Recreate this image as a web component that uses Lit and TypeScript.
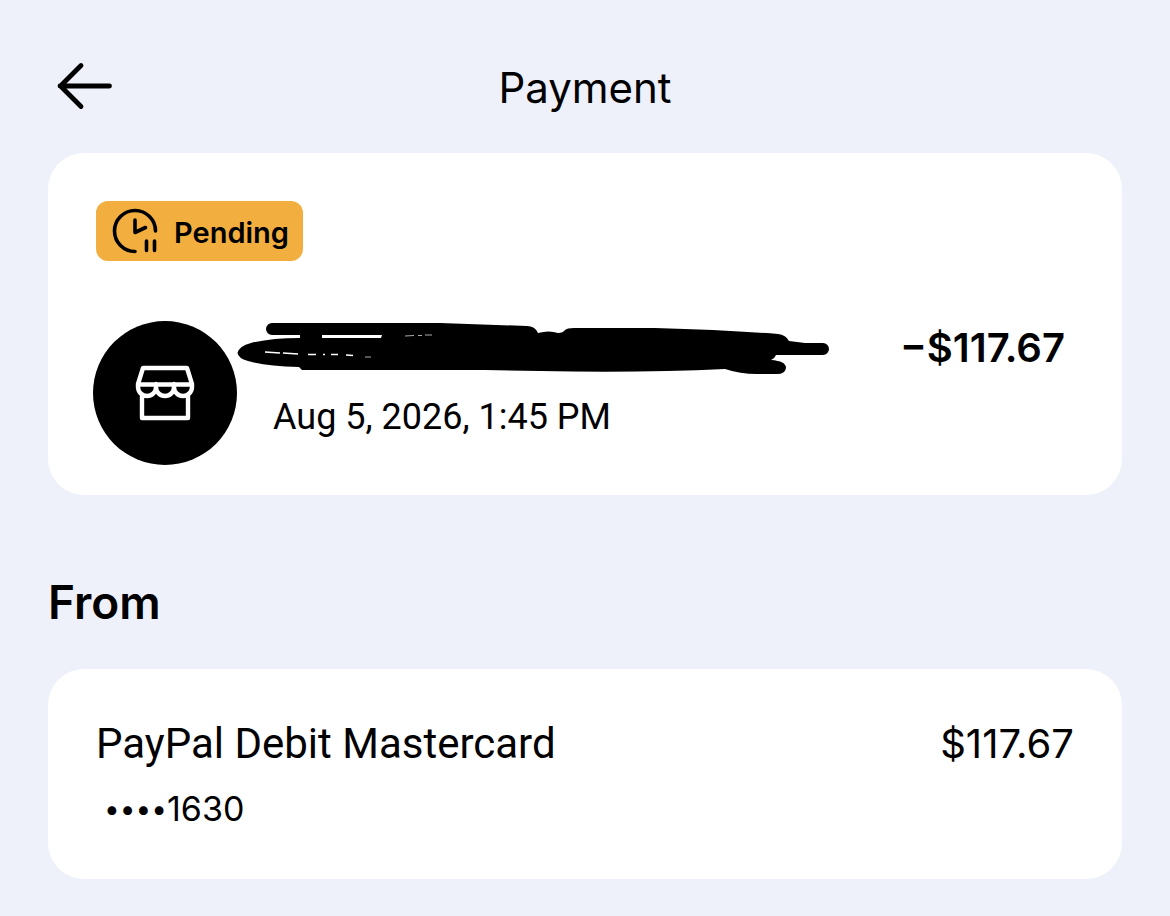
import { LitElement, html, css } from "lit";
import { customElement } from "lit/decorators.js";

@customElement("app-root")
class AppRoot extends LitElement {
  static styles = css`
    :host {
      display: block;
      box-sizing: border-box;
      min-height: 100vh;
      padding: 0 48px 37px;
      background: #eef1f9;
      color: #000;
      font-family: Inter, "Liberation Sans", sans-serif;
      font-size: 36px;
      line-height: 48px;
    }
    .header {
      display: grid;
      grid-template-columns: 72px 1fr 72px;
      align-items: center;
      padding: 50px 0 31px;
    }
    .back {
      display: flex;
      align-items: center;
      justify-content: center;
      width: 72px;
      height: 72px;
      padding: 0;
      border: 0;
      background: none;
      color: inherit;
    }
    .title {
      margin: 0;
      padding-top: 4px;
      font-size: 42px;
      line-height: 52px;
      font-weight: 400;
      text-align: center;
    }
    svg {
      display: block;
      flex: none;
    }
    .card {
      border-radius: 36px;
      background: #fff;
    }
    .summary {
      padding: 48px 57px 30px 45px;
    }
    .badge {
      display: flex;
      align-items: center;
      gap: 16px;
      box-sizing: border-box;
      width: fit-content;
      height: 60px;
      margin-left: 3px;
      padding: 0 14px 0 16px;
      border-radius: 12px;
      background: #f2ae3f;
      font-size: 29px;
      font-weight: 600;
    }
    .badge span {
      padding-top: 4px;
    }
    .row {
      display: flex;
      justify-content: space-between;
    }
    .payee {
      margin-top: 60px;
    }
    .avatar {
      display: flex;
      flex: none;
      align-items: center;
      justify-content: center;
      width: 144px;
      height: 144px;
      border-radius: 50%;
      background: #000;
    }
    .details {
      flex: 1;
    }
    .date {
      margin: 16px 0 0 36px;
      font-family: Roboto, "Liberation Sans", sans-serif;
    }
    .amount {
      font-size: 40px;
      line-height: 54px;
    }
    .total {
      font-weight: 600;
    }
    .section {
      margin: 76px 0 36px;
      font-size: 46px;
      line-height: 62px;
      font-weight: 600;
    }
    .source {
      padding: 48px;
    }
    .account {
      font-family: Roboto, "Liberation Sans", sans-serif;
      font-size: 42px;
      line-height: 54px;
    }
    .number {
      margin: 16px 0 0 8px;
      font-size: 34px;
      line-height: 44px;
    }
    .dots {
      font-size: 28px;
      line-height: 28px;
      vertical-align: 2px;
    }
  `;

  render() {
    return html`
      <header class="header">
        <button class="back" aria-label="Back">
          <svg width="56" height="48" viewBox="0 0 56 48" fill="none" stroke="#000" stroke-width="4.8" stroke-linecap="round" stroke-linejoin="round">
            <path d="M53.500 24H4M25 3.500L4.500 24L25 44.500" />
          </svg>
        </button>
        <h1 class="title">Payment</h1>
      </header>
      <main>
        <section class="card summary">
          <div class="badge">
            <svg width="46" height="46" viewBox="0 0 46 46" fill="none" stroke="#000" stroke-width="3.600" stroke-linecap="round" stroke-linejoin="round">
              <path d="M23 43.500A20.500 20.500 0 1 1 43.500 23M23 12V24.500L33.500 19.500M34.500 33V42.500M42.500 33V42.500" />
            </svg>
            <span>Pending</span>
          </div>
          <div class="row payee">
            <div class="avatar">
              <svg width="60" height="60" viewBox="0 0 60 60" fill="none" stroke="#fff" stroke-width="4.4" stroke-linejoin="round">
                <path d="M8 5H52L57 21V24A9 9 0 0 1 39 24V21V24A9 9 0 0 1 21 24V21V24A9 9 0 0 1 3 24V21ZM3 21.500H57M7 32V55H53V32" />
              </svg>
            </div>
            <div class="details">
              <svg width="594" height="56" viewBox="237 321 594 56" role="img" aria-label="Name hidden">
                <path d="M272 323H440L527 326Q535 326 538 333Q549 330 558 333Q563 333 565 330Q567 328 574 328H655Q725 330 778 334Q786 335 789 341L805 343H823A6 6 0 0 1 823 355H776Q775 358 771 360Q786 361 786 368Q785 374 777 374H757Q740 374 725 369Q640 373 540 371L485 370H302L299 367Q265 366 248 361Q238 358 237.500 353Q239 346 251 343Q271 338 300 338V335H272A6 6 0 0 1 272 323Z" />
                <path d="M322 335H382L381 338H322Z" fill="#fff" />
                <path d="M265 352L280 353M283 353L298 354M308 354.500H316M323 354.500H325M331 354.500H338M346 355L353 355.500" stroke="#fff" stroke-width="1.500" />
                <path d="M405 336L414 335.500M418 335.500H422M425 335H432M365 357H371" stroke="#aaa" stroke-width="1" />
              </svg>
              <p class="date">Aug 5, 2026, 1:45 PM</p>
            </div>
            <div class="amount total">−$117.67</div>
          </div>
        </section>
        <h2 class="section">From</h2>
        <section class="card source">
          <div class="row">
            <span class="account">PayPal Debit Mastercard</span>
            <span class="amount">$117.67</span>
          </div>
          <p class="number"><span class="dots">••••</span>1630</p>
        </section>
      </main>
    `;
  }
}
